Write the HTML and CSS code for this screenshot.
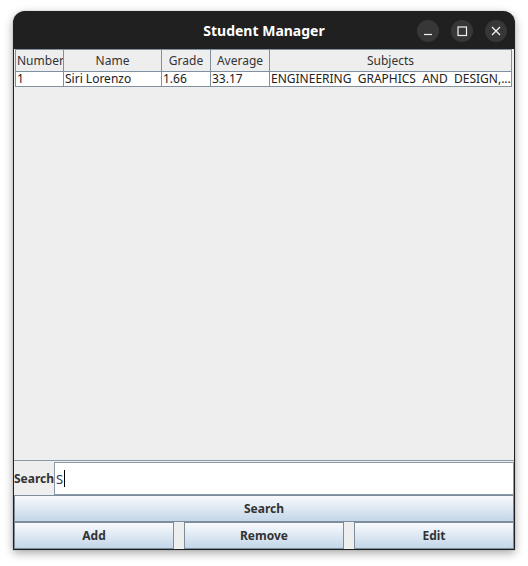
FILE: index.html
```html
<!DOCTYPE html>
<html>
<head>
<meta charset="utf-8">
<link rel="stylesheet" href="styles.css">
</head>
<body>
<div class="window">
  <div class="titlebar">
    <div class="title">Student Manager</div>
    <div class="controls">
      <span class="ctl"><svg width="22" height="22" viewBox="0 0 22 22"><line x1="7" y1="14.5" x2="15" y2="14.5" stroke="#f2f2f2" stroke-width="1.2"/></svg></span>
      <span class="ctl"><svg width="22" height="22" viewBox="0 0 22 22"><rect x="7" y="7" width="8.5" height="8.5" fill="none" stroke="#f2f2f2" stroke-width="1.2"/></svg></span>
      <span class="ctl"><svg width="22" height="22" viewBox="0 0 22 22"><path d="M7 7 L15 15 M15 7 L7 15" stroke="#f2f2f2" stroke-width="1.3"/></svg></span>
    </div>
  </div>
  <div class="content">
    <div class="pane">
      <table class="grid">
        <colgroup>
          <col class="c-num"><col class="c-name"><col class="c-grade"><col class="c-avg"><col>
        </colgroup>
        <thead>
          <tr><th>Number</th><th>Name</th><th>Grade</th><th>Average</th><th>Subjects</th></tr>
        </thead>
        <tbody>
          <tr><td>1</td><td>Siri Lorenzo</td><td>1.66</td><td>33.17</td><td>ENGINEERING&nbsp; GRAPHICS&nbsp; AND&nbsp; DESIGN,...</td></tr>
        </tbody>
      </table>
    </div>
    <div class="search-row">
      <span class="search-label">Search</span>
      <div class="field"><span class="field-text">S</span><span class="caret"></span></div>
    </div>
    <button class="btn btn-wide">Search</button>
    <div class="btn-row">
      <button class="btn">Add</button>
      <button class="btn">Remove</button>
      <button class="btn">Edit</button>
    </div>
  </div>
</div>
</body>
</html>
```
FILE: styles.css
```css
html, body {
  margin: 0;
  padding: 0;
  background: #ffffff;
}
body {
  font-family: "Noto Sans", "DejaVu Sans", sans-serif;
  width: 528px;
  height: 566px;
  overflow: hidden;
}
.window {
  margin: 11px 0 0 13px;
  width: 502px;
  border-radius: 12px 12px 0 0;
  background: #202020;
  box-shadow: 0 3px 10px rgba(0, 0, 0, 0.35), 0 0 1px rgba(0,0,0,0.4);
}
.titlebar {
  height: 38px;
  position: relative;
  display: flex;
  align-items: center;
  justify-content: center;
}
.title {
  color: #ffffff;
  font-weight: bold;
  font-size: 14px;
  margin-top: 1px;
}
.controls {
  position: absolute;
  right: 8px;
  top: 9px;
  display: flex;
  gap: 12px;
}
.ctl {
  width: 22px;
  height: 22px;
  border-radius: 50%;
  background: #373737;
  display: block;
}
.ctl svg { display: block; }
.content {
  border: 1px solid #202020;
  border-top: 0;
  background: #eeeeee;
  display: flex;
  flex-direction: column;
}
.pane {
  height: 412px;
  box-sizing: border-box;
  padding: 0 2px 0 1px;
  border-bottom: 1px solid #8a99a8;
  background: #eeeeee;
}
.grid {
  width: 497px;
  border-collapse: collapse;
  table-layout: fixed;
  font-size: 12px;
  color: #222222;
}
.c-num { width: 48px; }
.c-name { width: 98px; }
.c-grade { width: 49px; }
.c-avg { width: 59px; }
.grid th {
  font-weight: normal;
  height: 21px;
  padding: 0;
  background: #eeeeee;
  border: 1px solid #7f90a0;
  text-align: center;
  color: #333333;
  white-space: nowrap;
  overflow: hidden;
}
.grid th:first-child { text-align: left; padding-left: 1px; }
.grid td {
  height: 14px;
  line-height: 14px;
  padding: 0 0 0 1px;
  background: #ffffff;
  border: 1px solid #7f90a0;
  border-top: 0;
  white-space: nowrap;
  overflow: hidden;
}
.search-row {
  height: 34px;
  display: flex;
  align-items: stretch;
  padding: 1px 0 0 0;
  box-sizing: border-box;
}
.search-label {
  width: 40px;
  font-weight: bold;
  font-size: 12px;
  color: #333333;
  display: flex;
  align-items: center;
}
.field {
  flex: 1;
  background: #ffffff;
  border: 1px solid #8a99a8;
  display: flex;
  align-items: center;
  padding-left: 1px;
}
.field-text {
  font-size: 13px;
  color: #333366;
}
.caret {
  width: 1px;
  height: 17px;
  background: #000000;
  margin-left: 1px;
}
.btn {
  font-family: "Noto Sans", "DejaVu Sans", sans-serif;
  font-weight: bold;
  font-size: 12px;
  color: #333333;
  border: 1px solid #7d8d9c;
  background: linear-gradient(to bottom, #f8fafd 0%, #e3ecf5 40%, #c3d6e9 100%);
  height: 27px;
  padding: 0;
  margin: 0;
  box-sizing: border-box;
}
.btn-wide { width: 100%; }
.btn-row {
  display: grid;
  grid-template-columns: 1fr 1fr 1fr;
  column-gap: 10px;
}
```
